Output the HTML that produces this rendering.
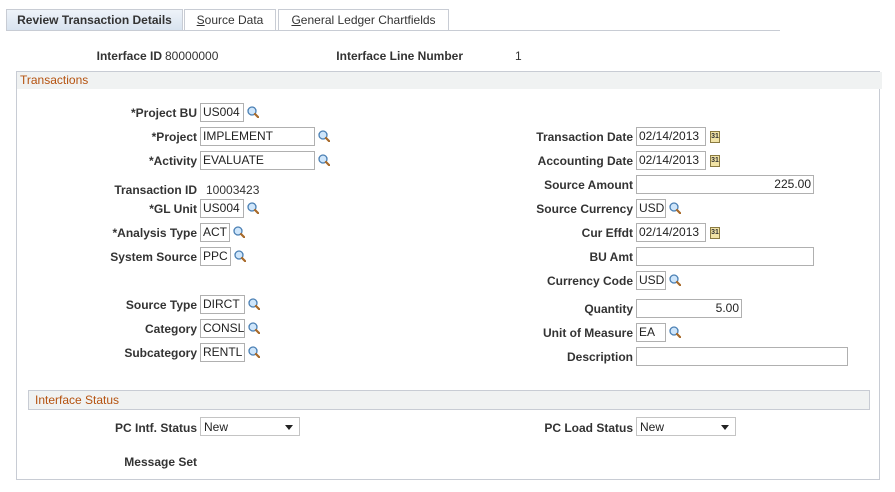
<html><head><style>
body{margin:0;width:895px;height:492px;background:#fff;font-family:"Liberation Sans",Arial,sans-serif;font-size:12px;color:#333;position:relative;overflow:hidden}
.a{position:absolute}
.l{position:absolute;font-weight:bold;text-align:right;white-space:nowrap;line-height:14px;margin-top:1px}
.i{position:absolute;height:17px;border:1px solid #b0b0b0;background:#fff;font-size:12px;line-height:17px;padding:0 2px;box-sizing:content-box;color:#222;white-space:nowrap;overflow:hidden;margin-top:1px}
.t{position:absolute;top:9px;height:20px;border:1px solid #c8ccd4;border-bottom:none;font-size:12px;line-height:20px;text-align:center;background:#fff;color:#333}
.m{position:absolute;width:12px;height:12px;margin-top:1px}
.c{position:absolute;width:10px;height:12px;background:#f1e3a6;border:1px solid #8a7a40;box-sizing:border-box;font-size:7px;line-height:10px;text-align:center;font-weight:bold;color:#333;margin-top:1px}
.s{position:absolute;height:19px;border:1px solid #c4c4c4;background:#fff;line-height:18px;padding-left:3px;box-sizing:border-box;color:#222}
.s:after{content:"";position:absolute;right:6px;top:7px;border-left:4px solid transparent;border-right:4px solid transparent;border-top:5px solid #222}
</style></head><body>
<svg width="0" height="0" style="position:absolute"><defs><g id="mg"><circle cx="5" cy="5" r="4" fill="#cfe6fb" stroke="#4a7fb3" stroke-width="1.3"/><line x1="8" y1="8" x2="12" y2="12" stroke="#a86a2a" stroke-width="2.2" stroke-linecap="round"/></g></defs></svg>
<div class="t" style="left:6px;width:175px;background:linear-gradient(#eef3f9,#d8e3ef);font-weight:bold">Review Transaction Details</div>
<div class="t" style="left:184px;width:90px"><u>S</u>ource Data</div>
<div class="t" style="left:278px;width:169px"><u>G</u>eneral Ledger Chartfields</div>
<div class="a" style="left:6px;top:30px;width:774px;height:1px;background:#c8ccd4"></div>
<div class="l" style="right:733px;top:48px">Interface ID</div><div class="a" style="left:165px;top:49px">80000000</div>
<div class="l" style="right:432px;top:48px">Interface Line Number</div><div class="a" style="left:515px;top:49px">1</div>
<div class="a" style="left:16px;top:71px;width:864px;height:409px;border:1px solid #c8ccd4;box-sizing:border-box"></div>
<div class="a" style="left:17px;top:72px;width:862px;height:17px;background:#f0f2f2;color:#b5520f;line-height:17px;padding-left:3px;font-size:12px">Transactions</div>

<div class="l" style="right:698px;top:105px">*Project BU</div><div class="i" style="left:200px;top:102px;width:38px">US004</div><svg class="m" style="left:247px;top:105px"><use href="#mg"/></svg>
<div class="l" style="right:698px;top:129px">*Project</div><div class="i" style="left:200px;top:126px;width:109px">IMPLEMENT</div><svg class="m" style="left:318px;top:129px"><use href="#mg"/></svg>
<div class="l" style="right:698px;top:153px">*Activity</div><div class="i" style="left:200px;top:150px;width:109px">EVALUATE</div><svg class="m" style="left:318px;top:153px"><use href="#mg"/></svg>
<div class="l" style="right:698px;top:182px">Transaction ID</div><div class="a" style="left:206px;top:183px">10003423</div>
<div class="l" style="right:698px;top:201px">*GL Unit</div><div class="i" style="left:200px;top:198px;width:38px">US004</div><svg class="m" style="left:247px;top:201px"><use href="#mg"/></svg>
<div class="l" style="right:698px;top:225px">*Analysis Type</div><div class="i" style="left:200px;top:222px;width:24px">ACT</div><svg class="m" style="left:233px;top:225px"><use href="#mg"/></svg>
<div class="l" style="right:698px;top:249px">System Source</div><div class="i" style="left:200px;top:246px;width:25px">PPC</div><svg class="m" style="left:234px;top:249px"><use href="#mg"/></svg>
<div class="l" style="right:698px;top:297px">Source Type</div><div class="i" style="left:200px;top:294px;width:39px">DIRCT</div><svg class="m" style="left:248px;top:297px"><use href="#mg"/></svg>
<div class="l" style="right:698px;top:321px">Category</div><div class="i" style="left:200px;top:318px;width:39px">CONSL</div><svg class="m" style="left:248px;top:321px"><use href="#mg"/></svg>
<div class="l" style="right:698px;top:345px">Subcategory</div><div class="i" style="left:200px;top:342px;width:39px">RENTL</div><svg class="m" style="left:248px;top:345px"><use href="#mg"/></svg>

<div class="l" style="right:262px;top:129px">Transaction Date</div><div class="i" style="left:636px;top:126px;width:64px">02/14/2013</div><div class="c" style="left:710px;top:130px">31</div>
<div class="l" style="right:262px;top:153px">Accounting Date</div><div class="i" style="left:636px;top:150px;width:64px">02/14/2013</div><div class="c" style="left:710px;top:154px">31</div>
<div class="l" style="right:262px;top:177px">Source Amount</div><div class="i" style="left:636px;top:174px;width:172px;text-align:right">225.00</div>
<div class="l" style="right:262px;top:201px">Source Currency</div><div class="i" style="left:636px;top:198px;width:24px">USD</div><svg class="m" style="left:669px;top:201px"><use href="#mg"/></svg>
<div class="l" style="right:262px;top:225px">Cur Effdt</div><div class="i" style="left:636px;top:222px;width:64px">02/14/2013</div><div class="c" style="left:710px;top:226px">31</div>
<div class="l" style="right:262px;top:249px">BU Amt</div><div class="i" style="left:636px;top:246px;width:172px"></div>
<div class="l" style="right:262px;top:273px">Currency Code</div><div class="i" style="left:636px;top:270px;width:24px">USD</div><svg class="m" style="left:669px;top:273px"><use href="#mg"/></svg>
<div class="l" style="right:262px;top:301px">Quantity</div><div class="i" style="left:636px;top:298px;width:100px;text-align:right">5.00</div>
<div class="l" style="right:262px;top:325px">Unit of Measure</div><div class="i" style="left:636px;top:322px;width:24px">EA</div><svg class="m" style="left:669px;top:325px"><use href="#mg"/></svg>
<div class="l" style="right:262px;top:349px">Description</div><div class="i" style="left:636px;top:346px;width:206px"></div>

<div class="a" style="left:28px;top:390px;width:842px;height:20px;background:#f0f2f2;border:1px solid #c8ccd4;box-sizing:border-box;color:#b5520f;line-height:18px;padding-left:6px">Interface Status</div>
<div class="l" style="right:698px;top:420px">PC Intf. Status</div><div class="s" style="left:200px;top:417px;width:100px">New</div>
<div class="l" style="right:262px;top:420px">PC Load Status</div><div class="s" style="left:636px;top:417px;width:100px">New</div>
<div class="l" style="right:698px;top:454px">Message Set</div>
</body></html>
